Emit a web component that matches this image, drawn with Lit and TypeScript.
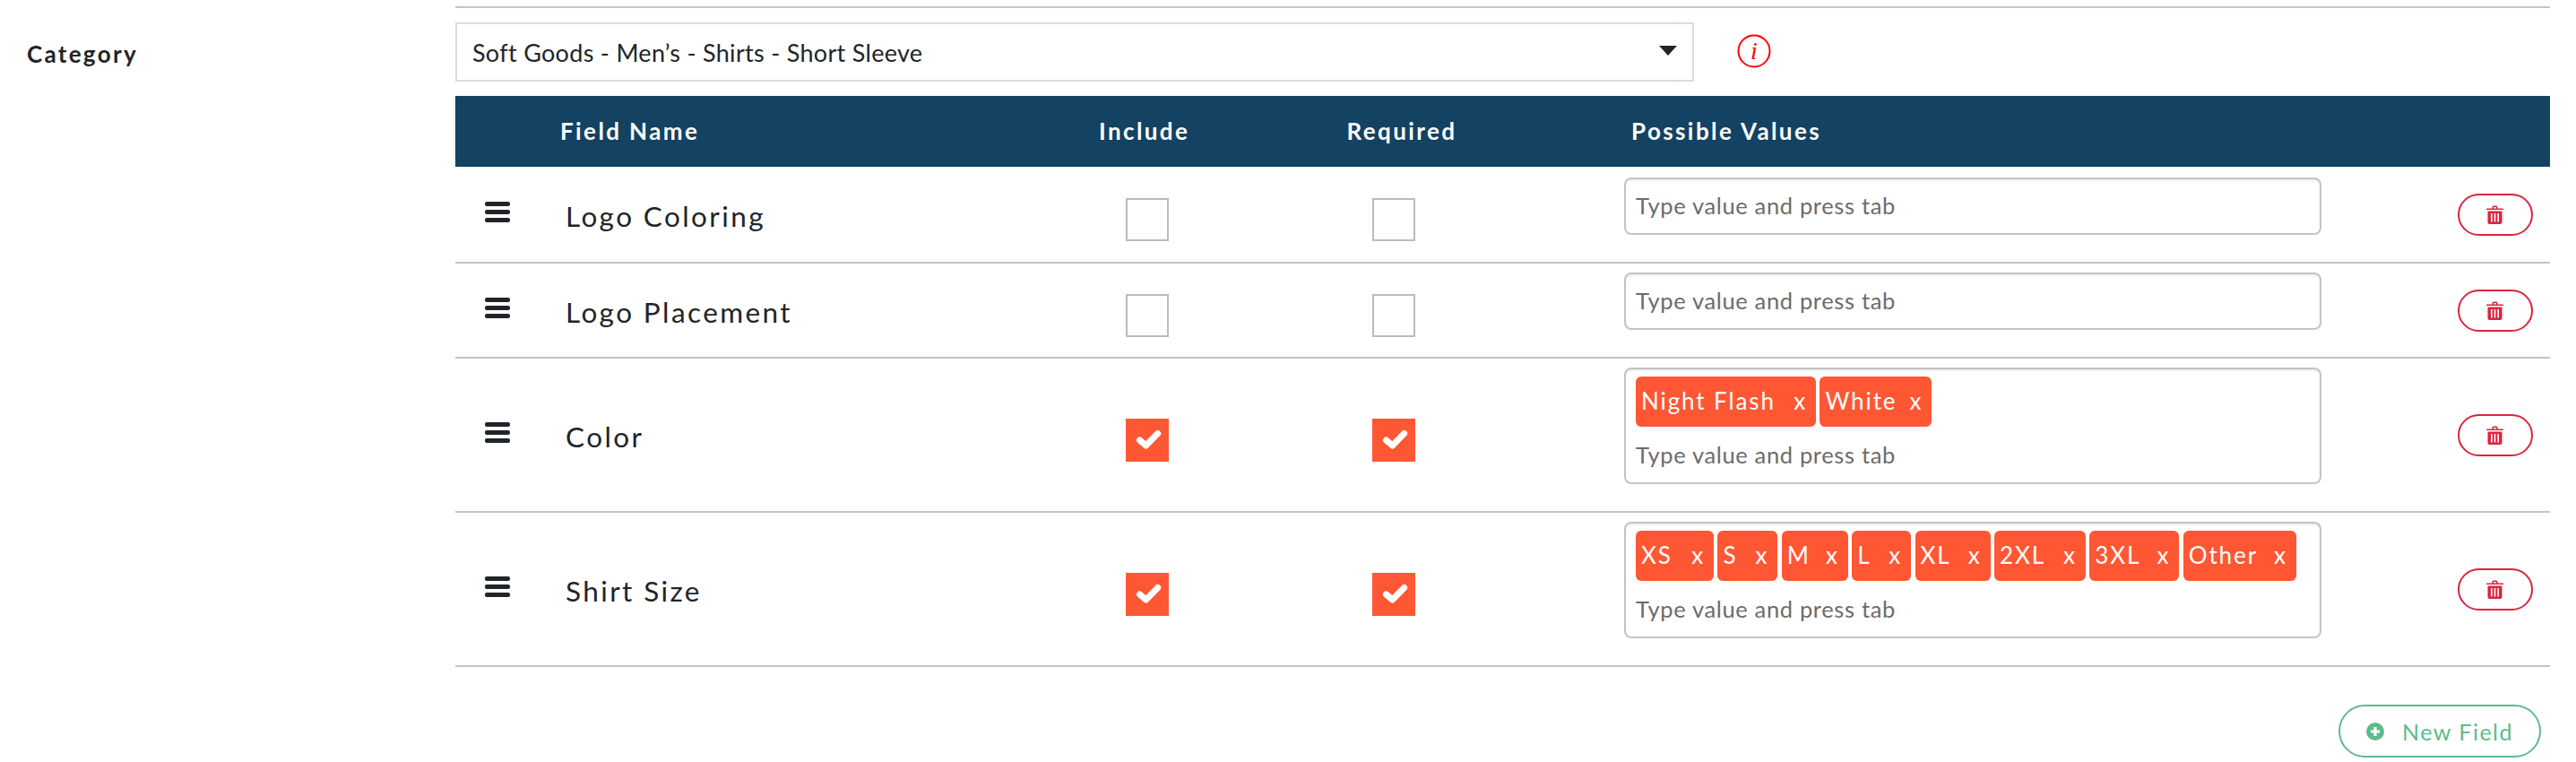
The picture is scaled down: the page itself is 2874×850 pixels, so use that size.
import { LitElement, html, css, svg } from "lit";
import { customElement } from "lit/decorators.js";

interface Tag { label: string; width: number; }
interface Field { name: string; checked: boolean; tags: Tag[]; }

const FIELDS: Field[] = [
  { name: "Logo Coloring", checked: false, tags: [] },
  { name: "Logo Placement", checked: false, tags: [] },
  { name: "Color", checked: true, tags: [
    { label: "Night Flash", width: 201 },
    { label: "White", width: 125 },
  ] },
  { name: "Shirt Size", checked: true, tags: [
    { label: "XS", width: 87 },
    { label: "S", width: 67 },
    { label: "M", width: 74 },
    { label: "L", width: 66 },
    { label: "XL", width: 84 },
    { label: "2XL", width: 102 },
    { label: "3XL", width: 100 },
    { label: "Other", width: 126 },
  ] },
];

const trash = svg`<path d="M6.5 3.5V2.2C6.5 1.2 7.3.5 8.2.5h2.6c.9 0 1.7.7 1.7 1.7v1.3H18c.6 0 1 .4 1 1v.5H0v-.5c0-.6.4-1 1-1zm1.6 0h2.8V2.3c0-.1-.1-.2-.2-.2H8.3c-.1 0-.2.1-.2.2z"/><path fill-rule="evenodd" d="M1.5 6.5h16V19c0 1.1-.9 2-2 2h-12c-1.1 0-2-.9-2-2zM5 9v9.5h1.6V9zm3.7 0v9.5h1.6V9zm3.7 0v9.5H14V9z"/>`;

@customElement("app-root")
export class AppRoot extends LitElement {
  static styles = css`
    :host {
      display: block;
      font-family: "Lato", "Liberation Sans", sans-serif;
      color: #212529;
      background: #fff;
      height: 850px;
      overflow: hidden;
    }
    .page { display: grid; grid-template-columns: 508px 2337px; padding-top: 7px; }
    .label {
      padding: 38px 0 0 30px;
      font-size: 26px;
      font-weight: 700;
      letter-spacing: 2.3px;
      line-height: 30px;
    }
    .main { display: flex; flex-direction: column; }
    .top-line { height: 2px; background: #c4c4c4; }
    .select-row { display: flex; align-items: center; margin-top: 16px; }
    .select {
      box-sizing: border-box;
      width: 1382px;
      height: 66px;
      border: 2px solid #d8dde1;
      display: flex;
      align-items: center;
      justify-content: space-between;
      padding: 0 17px 0 17px;
      font-size: 27px;
      letter-spacing: 0.3px;
    }
    .arrow { width: 0; height: 0; border-left: 10px solid transparent; border-right: 10px solid transparent; border-top: 11px solid #212529; margin-top: -3px; }
    .info { width: 38px; height: 38px; margin-left: 48px; display: block; margin-top: -2px; }
    .info text { font-family: "Liberation Serif", serif; font-style: italic; font-size: 28px; fill: #f00; }
    .head {
      margin-top: 16px;
      height: 79px;
      background: #134262;
      color: #fff;
      display: grid;
      grid-template-columns: 117px 601px 276.5px 317.5px 1fr;
      align-items: center;
      font-size: 26px;
      font-weight: 700;
      letter-spacing: 2.4px;
    }
    .head span { margin-top: -2px; }
    .row {
      display: grid;
      grid-template-columns: 123px 511.5px 275px 275px 119.5px 778px 1fr;
      border-bottom: 2px solid #c4c4c4;
      box-sizing: border-box;
    }
    .head + .row .values { padding-top: 12px; }
    .handle { align-self: center; justify-self: start; margin: 0 0 5px 33px; display: flex; flex-direction: column; gap: 4px; width: 28px; }
    .handle i { display: block; height: 5px; border-radius: 2px; background: #212529; }
    .name { align-self: center; font-size: 31.5px; letter-spacing: 2.4px; margin-top: 3px; }
    .check {
      align-self: center;
      justify-self: center;
      box-sizing: border-box;
      width: 48px;
      height: 48px;
      margin-top: 12px;
      border: 2px solid #bbbbbb;
      background: #fff;
    }
    .check.on { background: #ff5733; border: none; }
    .check svg { display: block; }
    .values { grid-column: 6; padding: 10px 0 30px; }
    .box {
      box-sizing: border-box;
      border: 2px solid #c4c4c4;
      border-radius: 8px;
      box-shadow: inset 0 2px 2px rgba(0,0,0,0.07);
      padding: 8px 11px;
    }
    .tags { display: flex; gap: 4.4px; margin-bottom: 10px; }
    .tag {
      box-sizing: border-box;
      height: 56px;
      background: #ff5733;
      color: #fff;
      border-radius: 6px;
      display: flex;
      align-items: center;
      justify-content: space-between;
      padding: 0 10px 3px 6px;
      font-size: 26px;
      letter-spacing: 1.9px;
    }
    .ph { line-height: 44px; font-size: 25.5px; color: #6b6b6b; letter-spacing: 0.65px; margin: -1px 0 1px; }
    .del {
      grid-column: 7;
      align-self: center;
      justify-self: end;
      margin-right: 19px;
      box-sizing: border-box;
      width: 84px;
      height: 47px;
      border: 2px solid #dc2440;
      border-radius: 24px;
      display: flex;
      align-items: center;
      justify-content: center;
      padding-right: 2px;
      fill: #dc2440;
    }
    .foot { display: flex; justify-content: flex-end; padding: 42px 10px 0 0; }
    .new {
      box-sizing: border-box;
      width: 226px;
      height: 59px;
      border: 2px solid #5dbb8e;
      border-radius: 30px;
      display: flex;
      align-items: center;
      padding-left: 29px;
      gap: 20px;
      color: #5dbb8e;
      font-size: 25px;
      letter-spacing: 1.5px;
    }
  `;

  private checkbox(on: boolean) {
    return html`<div class="check ${on ? "on" : ""}">
      ${on
        ? html`<svg width="48" height="48" viewBox="0 0 48 48"><polyline points="15.5,24 22.5,30 35.7,16.5" fill="none" stroke="#fff" stroke-width="7" stroke-linecap="round" stroke-linejoin="round"/></svg>`
        : ""}
    </div>`;
  }

  private row(f: Field) {
    return html`<div class="row">
      <div class="handle"><i></i><i></i><i></i></div>
      <div class="name">${f.name}</div>
      ${this.checkbox(f.checked)}
      ${this.checkbox(f.checked)}
      <div class="values">
        <div class="box">
          ${f.tags.length
            ? html`<div class="tags">${f.tags.map((t) => html`<div class="tag" style="width:${t.width}px"><span>${t.label}</span><span>x</span></div>`)}</div>`
            : ""}
          <div class="ph">Type value and press tab</div>
        </div>
      </div>
      <div class="del"><svg width="19" height="21" viewBox="0 0 19 21">${trash}</svg></div>
    </div>`;
  }

  render() {
    return html`<div class="page">
      <div class="label">Category</div>
      <div class="main">
        <div class="top-line"></div>
        <div class="select-row">
          <div class="select"><span>Soft Goods - Men’s - Shirts - Short Sleeve</span><div class="arrow"></div></div>
          <svg class="info" viewBox="0 0 38 38"><circle cx="19" cy="19" r="17.5" fill="none" stroke="#f00" stroke-width="2"/><text x="19" y="28" text-anchor="middle">i</text></svg>
        </div>
        <div class="head"><span></span><span>Field Name</span><span>Include</span><span>Required</span><span>Possible Values</span></div>
        ${FIELDS.map((f) => this.row(f))}
        <div class="foot">
          <div class="new">
            <svg width="20" height="20" viewBox="0 0 20 20"><circle cx="10" cy="10" r="10" fill="#5dbb8e"/><path d="M10 5v10M5 10h10" stroke="#fff" stroke-width="3.2"/></svg>
            <span>New Field</span>
          </div>
        </div>
      </div>
    </div>`;
  }
}
